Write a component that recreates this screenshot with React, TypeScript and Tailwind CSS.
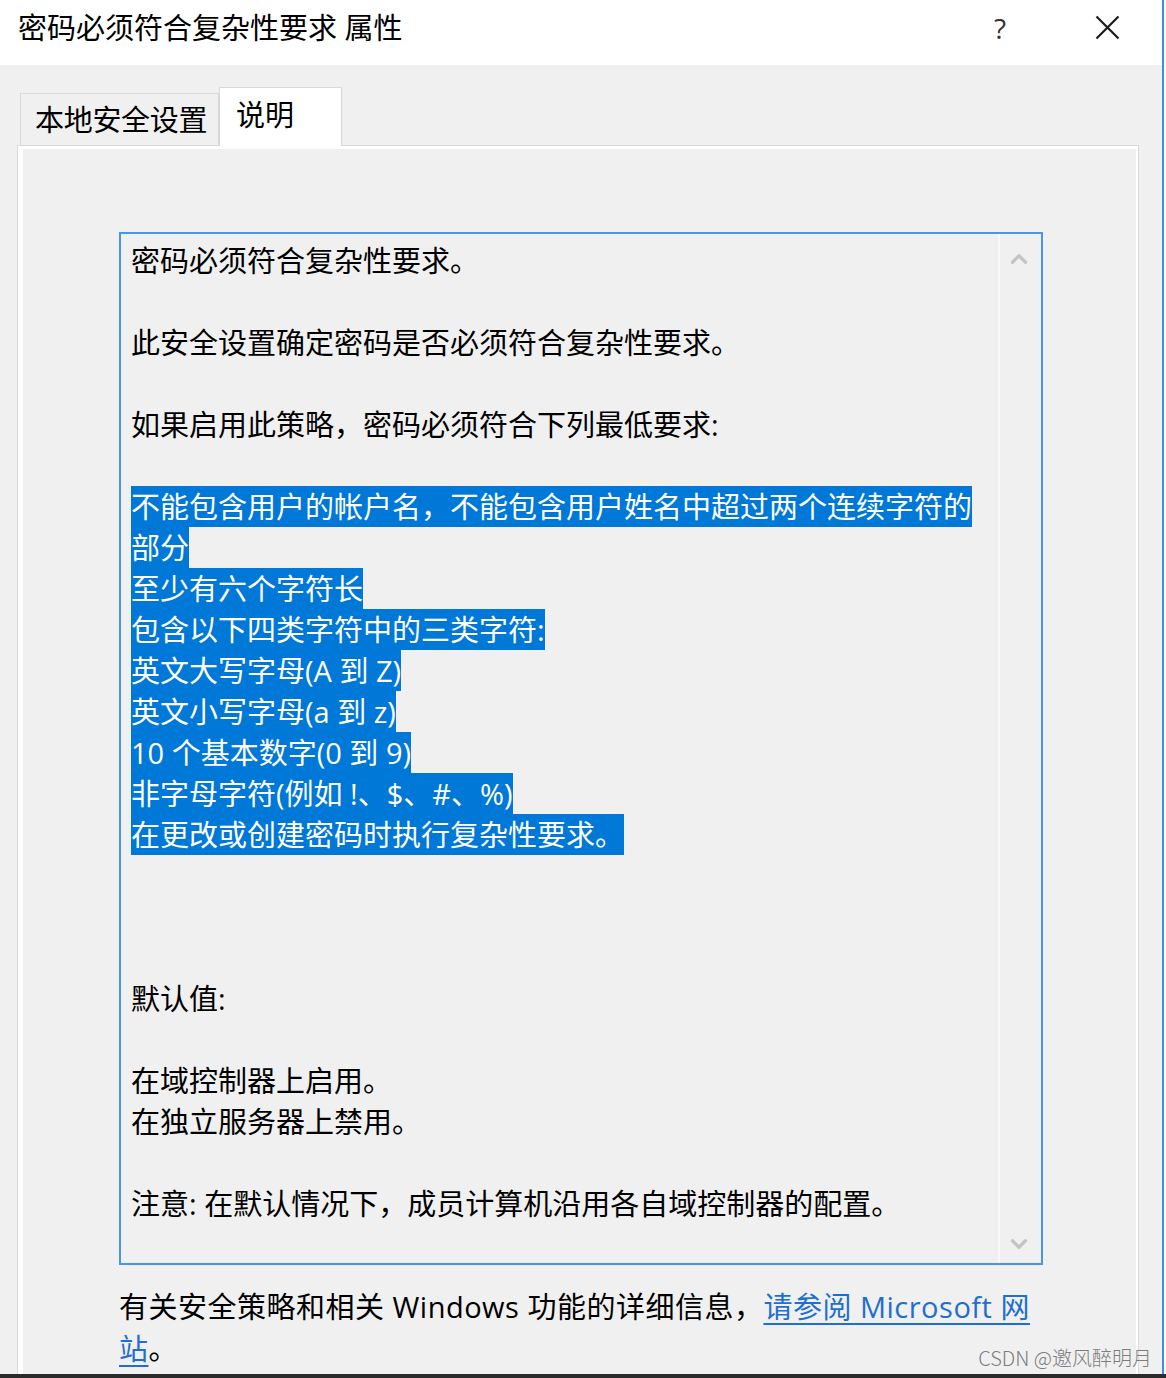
import { ChevronUp, ChevronDown } from 'lucide-react';

const plain = (t: string) => ({ t, sel: false });
const sel = (t: string) => ({ t, sel: true });

const lines = [
  plain('密码必须符合复杂性要求。'),
  plain(''),
  plain('此安全设置确定密码是否必须符合复杂性要求。'),
  plain(''),
  plain('如果启用此策略，密码必须符合下列最低要求:'),
  plain(''),
  sel('不能包含用户的帐户名，不能包含用户姓名中超过两个连续字符的'),
  sel('部分'),
  sel('至少有六个字符长'),
  sel('包含以下四类字符中的三类字符:'),
  sel('英文大写字母(A 到 Z)'),
  sel('英文小写字母(a 到 z)'),
  sel('10 个基本数字(0 到 9)'),
  sel('非字母字符(例如 !、$、#、%)'),
  sel('在更改或创建密码时执行复杂性要求。'),
  plain(''),
  plain(''),
  plain(''),
  plain('默认值:'),
  plain(''),
  plain('在域控制器上启用。'),
  plain('在独立服务器上禁用。'),
  plain(''),
  plain('注意: 在默认情况下，成员计算机沿用各自域控制器的配置。'),
];

export default function App() {
  return (
    <div className="relative w-[1166px] h-[1378px] flex flex-col bg-[#f0f0f0] text-black font-['Open_Sans','Noto_Sans_CJK_SC',sans-serif] overflow-hidden">
      <div className="flex flex-1 min-h-0">
        <div className="flex-1 flex flex-col">
          {/* title bar */}
          <div className="h-[65px] bg-white flex items-center pl-[18px] pb-[10px] shrink-0">
            <span className="text-[29px] leading-none">密码必须符合复杂性要求 属性</span>
            <span className="ml-auto text-[28px] leading-none text-[#333] w-[30px] text-center">?</span>
            <div className="ml-[80px] mr-[42px] w-[25px] h-[25px]">
              <svg viewBox="0 0 25 25" className="w-full h-full">
                <path d="M1.5 1.5 L23.5 23.5 M23.5 1.5 L1.5 23.5" stroke="#1a1a1a" strokeWidth="2.2" fill="none" />
              </svg>
            </div>
          </div>

          {/* body */}
          <div className="flex-1 pt-[22px]">
            {/* tabs */}
            <div className="flex items-end pl-[20px] h-[58px]">
              <div className="h-[52px] w-[199px] border border-b-0 border-[#d9d9d9] bg-[#f0f0f0] flex items-center pl-[14px] text-[29px] leading-none tracking-[-0.3px]">
                本地安全设置
              </div>
              <div className="relative z-10 -mb-px h-[59px] w-[123px] border border-b-0 border-[#d9d9d9] bg-white flex items-center pl-[16px] pb-[6px] text-[29px] leading-none">
                说明
              </div>
            </div>

            {/* panel */}
            <div className="ml-[17px] w-[1122px] h-[1300px] border border-[#d9d9d9]">
              <div className="h-full border-t-[3px] border-l-[5px] border-r-[2px] border-white">
                <div className="ml-[96px] mt-[83px] w-[924px] h-[1033px] border-2 border-[#4896e6] bg-[#f0f0f0] flex">
                  <div className="flex-1 pl-[10px] pt-[6px] text-[29px] leading-[41px] whitespace-nowrap">
                    {lines.map((l, i) =>
                      l.t === '' ? (
                        <div key={i} className="h-[41px]" />
                      ) : (
                        <div
                          key={i}
                          className={l.sel ? 'w-fit h-[41px] bg-[#0078d7] text-white' : 'w-fit h-[41px]'}
                        >
                          {l.t}
                        </div>
                      )
                    )}
                  </div>
                  <div className="w-[43px] border-l-2 border-[#f8f8f8] flex flex-col items-center justify-between pt-[12px] pb-[6px] pr-[3px]">
                    <ChevronUp className="w-[26px] h-[26px] text-[#c4c4c4]" strokeWidth={3} />
                    <ChevronDown className="w-[26px] h-[26px] text-[#c4c4c4]" strokeWidth={3} />
                  </div>
                </div>

                <p className="ml-[96px] mt-[21px] w-[940px] text-[29px] leading-[42px] tracking-[0.5px]">
                  有关安全策略和相关 Windows 功能的详细信息，
                  <span className="text-[#1f6fd0] underline underline-offset-[5px]">
                    请参阅 Microsoft 网
                    <br />站
                  </span>
                  。
                </p>
              </div>
            </div>
          </div>
        </div>
        <div className="w-[2px] bg-[#3d8fe0]" />
        <div className="w-[2px] bg-white" />
      </div>
      <div className="h-[4px] bg-[#2b2b2b] shrink-0" />

      <div className="absolute right-[14px] bottom-[8px] text-[20px] leading-[24px] font-light text-[#7d7d7d] font-['Noto_Sans_CJK_SC',sans-serif]">
        CSDN @邀风醉明月
      </div>
    </div>
  );
}
